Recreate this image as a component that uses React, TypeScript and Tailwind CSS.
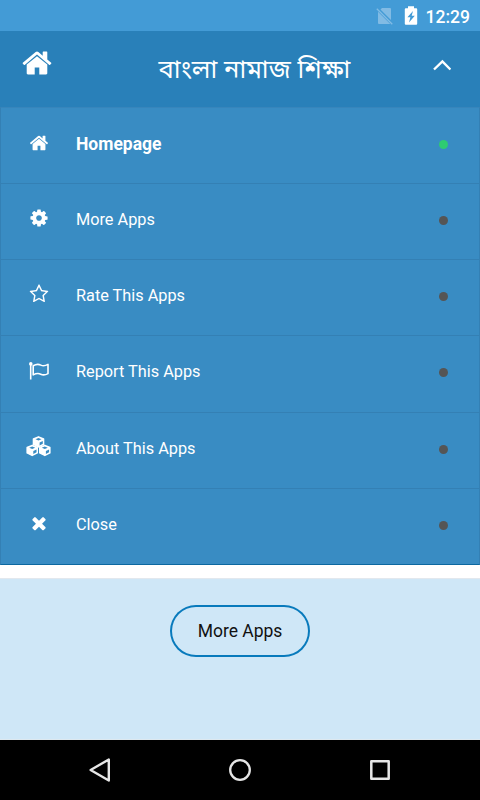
import React from "react";

const HOME =
  "M1472 992v480q0 26-19 45t-45 19h-384v-384h-256v384h-384q-26 0-45-19t-19-45v-480q0-1 .5-3t.5-3l575-474 575 474q1 2 1 6zm223-69l-62 74q-8 9-21 11h-3q-13 0-21-7l-692-577-692 577q-12 8-24 7-13-2-21-11l-62-74q-8-10-7-23.5t11-21.5l719-599q32-26 76-26t76 26l244 204v-195q0-14 9-23t23-9h192q14 0 23 9t9 23v408l219 182q10 8 11 21.5t-7 23.5z";
const COG =
  "M1152 896q0-106-75-181t-181-75-181 75-75 181 75 181 181 75 181-75 75-181zm512-109v222q0 12-8 23t-20 13l-185 28q-19 54-39 91 35 50 107 138 10 12 10 25t-9 23q-27 37-99 108t-94 71q-12 0-26-9l-138-108q-44 23-91 38-16 136-29 186-7 28-36 28h-222q-14 0-24.5-8.5t-11.5-21.5l-28-184q-49-16-90-37l-141 107q-10 9-25 9-14 0-25-11-126-114-165-168-7-10-7-23 0-12 8-23 15-21 51-66.5t54-70.5q-27-50-41-99l-183-27q-13-2-21-12.5t-8-23.5v-222q0-12 8-23t19-13l186-28q14-46 39-92-40-57-107-138-10-12-10-24 0-10 9-23 26-36 98.5-107.5t94.5-71.5q13 0 26 10l138 107q44-23 91-38 16-136 29-186 7-28 36-28h222q14 0 24.5 8.5t11.5 21.5l28 184q49 16 90 37l142-107q9-9 24-9 13 0 25 10 129 119 165 170 7 8 7 22 0 12-8 23-15 21-51 66.5t-54 70.5q26 50 41 98l183 28q13 2 21 12.5t8 23.5z";
const STAR =
  "M1201 1004l306-297-422-62-189-382-189 382-422 62 306 297-73 421 378-199 377 199zm527-357q0 22-26 48l-363 354 86 500q1 7 1 20 0 50-41 50-19 0-40-12l-449-236-449 236q-22 12-40 12-21 0-31.5-14.5t-10.5-35.5q0-6 2-20l86-500-364-354q-25-27-25-48 0-37 56-46l502-73 225-455q19-41 49-41t49 41l225 455 502 73q56 9 56 46z";
const TIMES =
  "M1490 1322q0 40-28 68l-136 136q-28 28-68 28t-68-28l-294-294-294 294q-28 28-68 28t-68-28l-136-136q-28-28-28-68t28-68l294-294-294-294q-28-28-28-68t28-68l136-136q28-28 68-28t68 28l294 294 294-294q28-28 68-28t68 28l136 136q28 28 28 68t-28 68l-294 294 294 294q28 28 28 68z";

function Glyph({ d, className }: { d: string; className: string }) {
  return (
    <svg viewBox="0 0 1792 1792" fill="currentColor" className={className}>
      <path d={d} />
    </svg>
  );
}

function Flag() {
  return (
    <svg viewBox="0 0 20 18" fill="none" stroke="currentColor" className="h-[18px] w-5">
      <circle cx="1.8" cy="1.9" r="1.8" fill="currentColor" stroke="none" />
      <path d="M1.7 2v15.5" strokeWidth="1.6" />
      <path
        d="M4.2 3.8C7.5 1.9 9.5 2 11.8 3.1c2.4 1.2 4.5.8 7.2-.7v9.2c-3 1.7-5 1.7-7.3.6-2.5-1.2-4.7-.8-7.5.7z"
        strokeWidth="1.6"
        strokeLinejoin="round"
      />
    </svg>
  );
}

function Cube({ x, y }: { x: number; y: number }) {
  return (
    <g transform={`translate(${x} ${y})`}>
      <path
        d="M6 .8 11 2.9v5.4L6 10.8 1 8.3V2.9z"
        fill="currentColor"
        stroke="currentColor"
        strokeWidth="1.6"
        strokeLinejoin="round"
      />
      <path d="M6 1.8 9 3.1 6 4.4 3 3.1zM7.1 6.4l3.2-1.4v2.7L7.1 9.4z" fill="#398cc3" />
    </g>
  );
}

function Cubes() {
  return (
    <svg viewBox="0 0 25 21" className="mr-[2px] h-[21px] w-[25px]">
      <Cube x={6.5} y={0.1} />
      <Cube x={0.2} y={8.6} />
      <Cube x={12.8} y={8.6} />
    </svg>
  );
}

const items = [
  { label: "Homepage", icon: <Glyph d={HOME} className="size-[20px]" />, y: "pt-[25px]", h: "h-[76px]", active: true },
  { label: "More Apps", icon: <Glyph d={COG} className="size-[20px]" />, y: "pt-[24px]", h: "h-[76px]" },
  { label: "Rate This Apps", icon: <Glyph d={STAR} className="size-[20px]" />, y: "pt-[24px]", h: "h-[76px]" },
  { label: "Report This Apps", icon: <Flag />, y: "pt-[26px]", h: "h-[77px]" },
  { label: "About This Apps", icon: <Cubes />, y: "pt-[23px]", h: "h-[76px]" },
  { label: "Close", icon: <Glyph d={TIMES} className="size-[20px]" />, y: "pt-[24px]", h: "h-[76px]" },
];

export default function App() {
  return (
    <div className="flex h-[800px] w-[480px] flex-col overflow-hidden bg-[#cfe7f7] font-[Roboto,sans-serif]">
      <div className="flex h-[31px] shrink-0 items-center justify-end bg-[#439bd6] pr-[10px] text-white">
        <svg viewBox="0 0 18 20" className="mr-[10px] h-5 w-[18px]">
          <path d="M6 2h8q1 0 1 1v11L4.5 3.5zM2 5.8 14.3 18H3q-1 0-1-1z" fill="#81bbe4" />
          <path d="M.8 2.7 16.3 18.2" stroke="#81bbe4" strokeWidth="1.3" />
        </svg>
        <svg viewBox="0 0 14 20" className="mr-[8px] h-5 w-[14px]">
          <path d="M4 .3h6v2h2.2q1 0 1 1v14.5q0 1-1 1H1.8q-1 0-1-1V3.3q0-1 1-1H4z" fill="white" />
          <path d="M9 5 3.4 11.2h3L5 16.4l5.8-6.6H7.7z" fill="#439bd6" />
        </svg>
        <span className="pt-[2px] text-[17.5px] leading-5 font-medium">12:29</span>
      </div>

      <header className="flex h-[76px] shrink-0 items-start bg-[#2980b9] text-white">
        <div className="w-[75px] pt-[16px] pl-[21px]">
          <Glyph d={HOME} className="size-8" />
        </div>
        <h1 className="flex-1 pt-[24px] pl-[6px] text-center font-['Noto_Sans_Bengali','Noto_Sans',sans-serif] text-[25.6px] leading-[34px] font-normal whitespace-nowrap">
          বাংলা নামাজ শিক্ষা
        </h1>
        <div className="w-[52px] pt-[28px] pl-[5px]">
          <svg viewBox="0 0 18 12" className="h-3 w-[18px]" fill="none" stroke="white" strokeWidth="2.4">
            <path d="M1 10.5 9.4 2.5l8 8" />
          </svg>
        </div>
      </header>

      <nav className="flex h-[458px] shrink-0 flex-col border-x border-t border-b border-x-[#3480b4] border-t-[#3785bb] border-b-[#0c68a0] bg-[#398cc3] text-white">
        {items.map((item) => (
          <div
            key={item.label}
            className={`flex shrink-0 items-start border-b border-[#3480b4] last:border-b-0 ${item.h}`}
          >
            <div className={`flex w-[75px] justify-center pl-px ${item.y}`}>{item.icon}</div>
            <span
              className={`flex-1 leading-6 ${item.active ? "pt-[24px] text-[17.5px] font-bold" : "pt-[24px] text-[16.3px] font-normal"}`}
            >
              {item.label}
            </span>
            <i className={`mt-[32px] mr-[31px] size-[9px] rounded-full ${item.active ? "bg-[#2ecc71]" : "bg-[#555555]"}`} />
          </div>
        ))}
      </nav>

      <div className="h-[14px] shrink-0 border-b border-[#e2e8ee] bg-white" />

      <main className="flex h-[161px] shrink-0 items-start justify-center border-b border-[#dde8ef] pt-[26px]">
        <div className="h-[52px] w-[140px] rounded-full bg-[#087abc] p-[2.4px]">
          <button className="h-full w-full rounded-full bg-[#cfe7f7] text-[17.5px] leading-5 text-[#111111]">
            More Apps
          </button>
        </div>
      </main>

      <footer className="flex h-[60px] shrink-0 items-center justify-between bg-black px-[88px]">
        <svg viewBox="0 0 24 26" className="h-[26px] w-6" fill="none" stroke="#e6e6e6" strokeWidth="2.4" strokeLinejoin="round">
          <path d="M20.8 2.5v21L2.6 13z" />
        </svg>
        <svg viewBox="0 0 22 22" className="mr-[2px] size-[22px]" fill="none" stroke="#e6e6e6" strokeWidth="2.3">
          <circle cx="11" cy="11" r="9.8" />
        </svg>
        <svg viewBox="0 0 20 20" className="mr-[2px] size-5" fill="none" stroke="#e6e6e6" strokeWidth="2.5" strokeLinejoin="round">
          <path d="M1.3 1.3h17.4v17.4H1.3z" />
        </svg>
      </footer>
    </div>
  );
}
